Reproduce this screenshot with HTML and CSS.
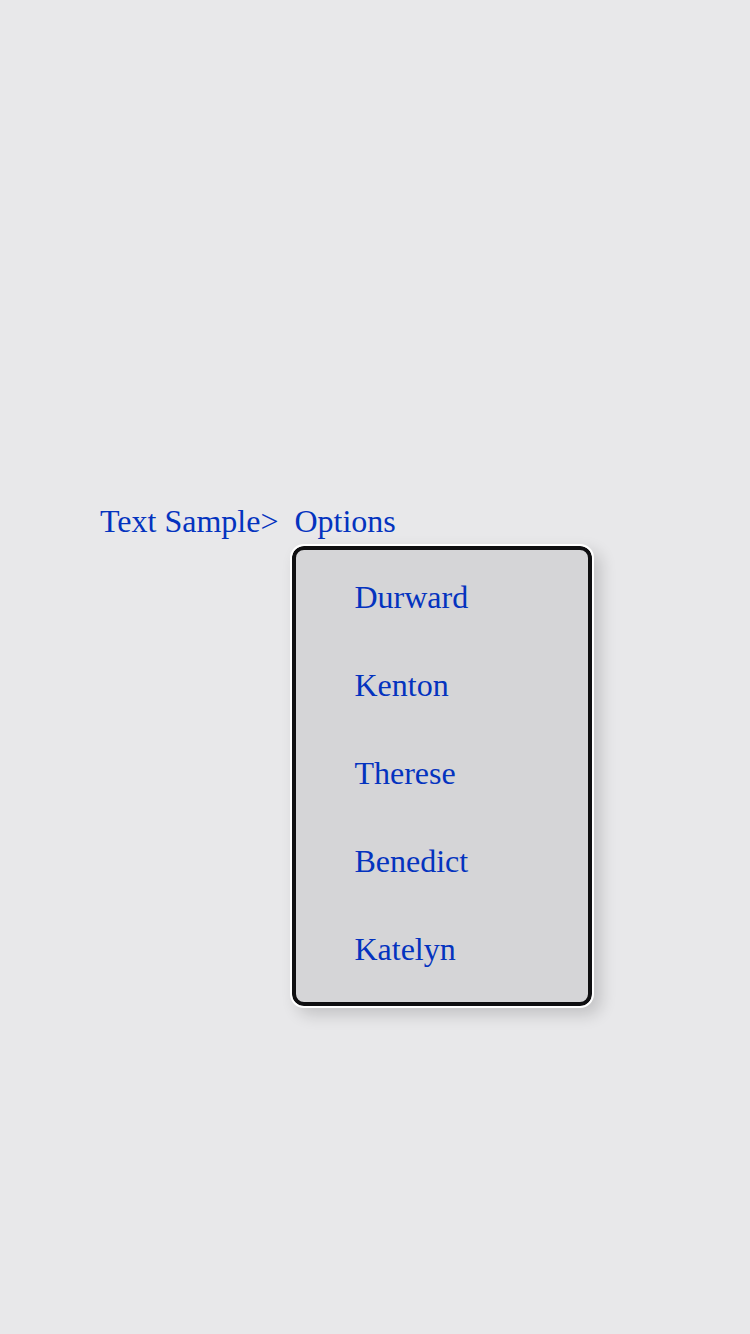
FILE: index.html
```html
<!DOCTYPE html>
<html lang="en">
<head>
<meta charset="utf-8">
<meta name="viewport" content="width=device-width, initial-scale=1">
<title>Options</title>
<link rel="stylesheet" href="styles.css">
</head>
<body class="page">
<nav class="breadcrumb" aria-label="Breadcrumb">
  <a class="link" href="#">Text Sample</a><span class="separator">&gt;</span>
  <div class="dropdown">
    <a class="link" href="#" aria-haspopup="true" aria-expanded="true">Options</a>
    <ul class="menu">
      <li><a class="menu-link" href="#">Durward</a></li>
      <li><a class="menu-link" href="#">Kenton</a></li>
      <li><a class="menu-link" href="#">Therese</a></li>
      <li><a class="menu-link" href="#">Benedict</a></li>
      <li><a class="menu-link" href="#">Katelyn</a></li>
    </ul>
  </div>
</nav>
</body>
</html>
```

FILE: styles.css
```css
* {
  box-sizing: border-box;
}

.page {
  margin: 0;
  min-height: 100vh;
  padding: 500px 100px 0;
  background: #e8e8ea;
  color: #0433bf;
  font: 32px/42px "Liberation Serif", "Times New Roman", serif;
}

.breadcrumb {
  display: flex;
}

.link,
.menu-link {
  color: inherit;
  text-decoration: none;
}

.dropdown {
  position: relative;
  margin-left: 16px;
}

.menu {
  position: absolute;
  top: 100%;
  left: -4px;
  width: 304px;
  margin: 2px 0 0;
  padding: 7px 0 13px;
  list-style: none;
  background: #d5d5d7;
  border: 2px solid #fff;
  border-radius: 14px;
  box-shadow: inset 0 0 0 4px #0f0f11, 7px 7px 16px rgba(0, 0, 0, 0.16);
}

.menu-link {
  display: block;
  padding: 23px 62px;
}
```
